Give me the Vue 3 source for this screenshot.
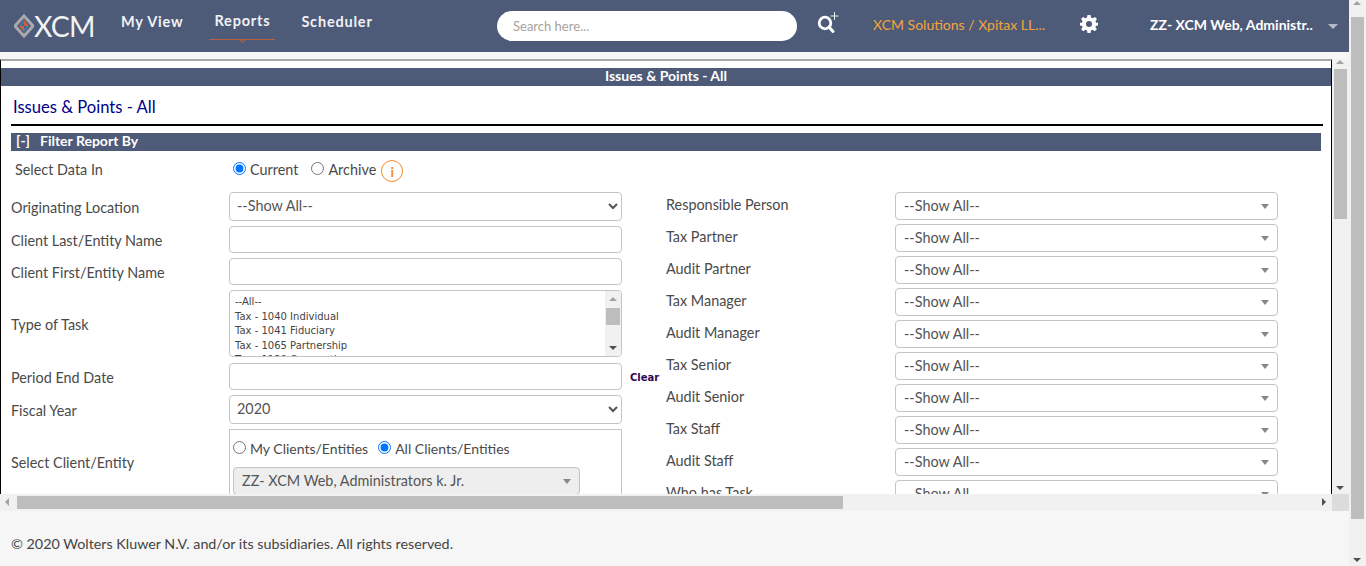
<template>
  <div class="page">
    <div class="main">
      <header class="topbar">
        <div class="logo">
          <svg class="logo-mark" width="20" height="26" viewBox="0 0 20 26">
            <path d="M10 3 L19 13 L10 23 L1 13 Z" fill="none" stroke="#a9a9ad" stroke-width="3" />
            <path d="M10 7 L15 13 L10 13 Z" fill="#d2603a" />
            <path d="M5 13 L10 13 L10 19 Z" fill="#d2603a" />
            <path d="M5 13 L10 7 L10 10 L7.5 13 Z" fill="#3f7fb5" />
            <path d="M15 13 L10 19 L10 16 L12.5 13 Z" fill="#3f7fb5" />
          </svg>
          <span class="logo-text">XCM</span>
        </div>
        <nav class="nav">
          <a class="nav-item">My View</a>
          <a class="nav-item active">Reports</a>
          <a class="nav-item">Scheduler</a>
        </nav>
        <div class="search">Search here...</div>
        <svg class="search-icon" width="24" height="24" viewBox="0 0 24 24">
          <circle cx="9" cy="12" r="5.8" fill="none" stroke="#fff" stroke-width="2.8" />
          <path d="M13 16 L17 20.5" stroke="#fff" stroke-width="3" stroke-linecap="round" />
          <path d="M18.5 1 V9 M14.5 5 H22.5" stroke="#fff" stroke-width="0.9" />
        </svg>
        <div class="org">XCM Solutions / Xpitax LL...</div>
        <svg class="gear" width="18" height="18" viewBox="0 0 24 24">
          <path fill="#fff" fill-rule="evenodd" d="M10 0 H14 L14.7 3.4 L17 4.4 L20 2.5 L22.6 5.3 L20.6 8.1 L21.5 10.3 L24 10.4 V13.9 L21.5 14.3 L20.6 16.2 L22.5 19 L19.6 21.7 L16.9 19.7 L14.7 20.6 L14 24 H10 L9.3 20.6 L7.1 19.7 L4.4 21.7 L1.5 19 L3.4 16.2 L2.5 14.3 L0 13.9 V10.4 L2.5 10.3 L3.4 8.1 L1.4 5.3 L4 2.5 L7 4.4 L9.3 3.4 Z M12 8 A4 4 0 1 0 12 16 A4 4 0 1 0 12 8 Z" />
        </svg>
        <div class="user">ZZ- XCM Web, Administr..</div>
        <span class="user-caret"></span>
      </header>

      <div class="frame-wrap">
        <div class="frame">
          <div class="frame-title">Issues &amp; Points - All</div>
          <h1 class="report-title">Issues &amp; Points - All</h1>
          <div class="filter-bar"><span class="toggle">[-]</span>Filter Report By</div>

          <div class="data-row">
            <span class="data-label">Select Data In</span>
            <label class="radio first"><input type="radio" name="data" checked />Current</label>
            <label class="radio"><input type="radio" name="data" />Archive</label>
            <span class="info">i</span>
          </div>

          <div class="columns">
            <div class="left">
              <div class="row r-location">
                <label>Originating Location</label>
                <select class="native"><option>--Show All--</option></select>
              </div>
              <div class="row r-input">
                <label>Client Last/Entity Name</label>
                <input class="text" type="text" />
              </div>
              <div class="row r-input">
                <label>Client First/Entity Name</label>
                <input class="text" type="text" />
              </div>
              <div class="row r-list">
                <label>Type of Task</label>
                <div class="listbox">
                  <div class="list-items">
                    <div v-for="t in tasks" :key="t">{{ t }}</div>
                  </div>
                  <div class="list-scroll">
                    <span class="arrow up small"></span>
                    <span class="list-thumb"></span>
                    <span class="arrow down small"></span>
                  </div>
                </div>
              </div>
              <div class="row r-period">
                <label>Period End Date</label>
                <input class="text" type="text" />
                <a class="clear">Clear</a>
              </div>
              <div class="row r-year">
                <label>Fiscal Year</label>
                <select class="native"><option>2020</option></select>
              </div>
              <div class="row r-client">
                <label>Select Client/Entity</label>
                <div class="client-box">
                  <div class="client-radios">
                    <label class="radio"><input type="radio" name="client" />My Clients/Entities</label>
                    <label class="radio"><input type="radio" name="client" checked />All Clients/Entities</label>
                  </div>
                  <div class="fake-select disabled">
                    <span>ZZ- XCM Web, Administrators k. Jr.</span>
                    <span class="caret"></span>
                  </div>
                </div>
              </div>
            </div>

            <div class="right">
              <div v-for="p in people" :key="p" class="person">
                <label>{{ p }}</label>
                <div class="fake-select">
                  <span>--Show All--</span>
                  <span class="caret"></span>
                </div>
              </div>
            </div>
          </div>
        </div>
        <div class="vbar inner">
          <span class="arrow up"></span>
          <span class="vthumb inner-thumb"></span>
          <span class="arrow down"></span>
        </div>
      </div>

      <div class="hbar">
        <span class="arrow left"></span>
        <div class="htrack"><span class="hthumb"></span></div>
        <span class="arrow right"></span>
        <span class="corner"></span>
      </div>

      <footer class="footer">© 2020 Wolters Kluwer N.V. and/or its subsidiaries. All rights reserved.</footer>
    </div>

    <div class="vbar outer">
      <span class="arrow up"></span>
      <span class="vthumb outer-thumb"></span>
      <span class="arrow down"></span>
    </div>
  </div>
</template>

<script setup>
const tasks = [
  '--All--',
  'Tax - 1040 Individual',
  'Tax - 1041 Fiduciary',
  'Tax - 1065 Partnership',
  'Tax - 1120 Corporation',
]

const people = [
  'Responsible Person',
  'Tax Partner',
  'Audit Partner',
  'Tax Manager',
  'Audit Manager',
  'Tax Senior',
  'Audit Senior',
  'Tax Staff',
  'Audit Staff',
  'Who has Task',
]
</script>

<style>
html,
body {
  margin: 0;
  overflow: hidden;
}
</style>

<style scoped>
.page {
  display: flex;
  width: 1366px;
  height: 566px;
  overflow: hidden;
  font-family: Lato, "Open Sans", sans-serif;
  font-size: 14.4px;
  color: #4a4a4a;
  background: #f6f6f6;
}

.main {
  display: flex;
  flex-direction: column;
  width: 1349px;
  flex: none;
}

/* top bar */
.topbar {
  display: flex;
  align-items: center;
  height: 52px;
  flex: none;
  background: #4d5a78;
  color: #fff;
}

.logo {
  display: flex;
  align-items: center;
  width: 121px;
  padding-left: 14px;
  padding-bottom: 1px;
  box-sizing: border-box;
  flex: none;
}

.logo-text {
  font-size: 28.5px;
  font-weight: 400;
  letter-spacing: -0.8px;
  line-height: 26px;
  color: #f2f2f2;
}

.nav {
  display: flex;
  width: 376px;
  flex: none;
  margin-top: -6px;
  font-size: 14.5px;
  font-weight: 700;
  letter-spacing: 0.8px;
  color: #f0f1f4;
}

.nav-item {
  position: relative;
  margin-right: 31px;
  padding-bottom: 3px;
}

.nav-item.active {
  margin: -1px 26px 1px -5px;
  padding: 0 5px;
}

.nav-item.active::after {
  content: "";
  position: absolute;
  left: 0;
  right: 0;
  top: 27px;
  height: 1px;
  background: #b8603f;
}

.nav-item.active::before {
  content: "";
  position: absolute;
  left: 50%;
  top: 25px;
  width: 4px;
  height: 4px;
  margin-left: -2px;
  border-right: 1px solid #b8603f;
  border-bottom: 1px solid #b8603f;
  transform: rotate(45deg);
}

.search {
  width: 300px;
  height: 30px;
  flex: none;
  margin-top: -1px;
  padding-left: 16px;
  box-sizing: border-box;
  border-radius: 15px;
  background: #fff;
  color: #a8a29c;
  font-size: 13px;
  line-height: 30px;
}

.search-icon {
  flex: none;
  margin: -7px 0 0 19px;
}

.org {
  width: 207px;
  flex: none;
  margin-left: 33px;
  margin-top: -4px;
  color: #f5a43c;
  font-size: 14px;
  white-space: nowrap;
}

.gear {
  flex: none;
  margin-top: -5px;
  margin-right: 52px;
}

.user {
  width: 178px;
  flex: none;
  margin-top: -4px;
  font-size: 14px;
  font-weight: 700;
  white-space: nowrap;
}

.user-caret {
  flex: none;
  margin-top: 1px;
  border-left: 5px solid transparent;
  border-right: 5px solid transparent;
  border-top: 5px solid #b4bac8;
}

/* report frame */
.frame-wrap {
  display: flex;
  height: 435px;
  flex: none;
  margin-top: 7px;
}

.frame {
  width: 1332px;
  flex: none;
  box-sizing: border-box;
  overflow: hidden;
  border-top: 2px solid #a9a9a9;
  border-left: 1px solid #000;
  border-right: 1px solid #000;
  background: #fff;
}

.frame-title {
  height: 18px;
  margin-top: 7px;
  background: #4d5a78;
  color: #fff;
  font-size: 14px;
  font-weight: 700;
  line-height: 16px;
  text-align: center;
}

.report-title {
  height: 38px;
  margin: 0 8px 0 10px;
  padding-left: 2px;
  border-bottom: 2px solid #000;
  color: #00008b;
  font-size: 16.6px;
  font-weight: 400;
  line-height: 42px;
}

.filter-bar {
  height: 18px;
  margin: 7px 10px 0;
  padding-left: 5px;
  background: #4d5a78;
  color: #fff;
  font-size: 14px;
  font-weight: 700;
  line-height: 16px;
}

.toggle {
  margin-right: 10px;
}

.data-row {
  display: flex;
  align-items: center;
  height: 24px;
  margin: 6px 0 11px 14px;
}

.data-label {
  width: 218px;
}

.radio {
  display: inline-flex;
  align-items: center;
  margin-right: 13px;
}

.radio input {
  width: 13px;
  height: 13px;
  margin: 0 4px 2px 0;
}

.info {
  display: flex;
  align-items: center;
  justify-content: center;
  width: 20px;
  height: 20px;
  margin-top: 4px;
  margin-left: -8px;
  border: 1px solid #f28c28;
  border-radius: 50%;
  color: #f28c28;
  font-size: 14px;
  font-weight: 700;
}

.columns {
  display: flex;
  padding-left: 10px;
}

.left {
  width: 655px;
  flex: none;
}

.row {
  display: flex;
  align-items: center;
}

.row > label {
  width: 218px;
  flex: none;
}

.native,
.text {
  width: 393px;
  box-sizing: border-box;
  border: 1px solid #c4c4c4;
  border-radius: 4px;
  background: #fff;
  color: #555;
  font-family: inherit;
  font-size: 14.4px;
}

.native {
  height: 29px;
  padding: 0 4px 2px 3px;
}

.text {
  height: 27px;
  padding: 0 8px;
}

.r-location {
  margin-bottom: 5px;
}

.r-location > label,
.r-year > label {
  padding-top: 1px;
}

.r-input {
  margin-bottom: 5px;
}

.r-input > label {
  padding-top: 2px;
}

.r-list {
  margin-bottom: 6px;
}

.r-list > label {
  padding-top: 2px;
}

.listbox {
  display: flex;
  width: 393px;
  height: 67px;
  box-sizing: border-box;
  overflow: hidden;
  border: 1px solid #c4c4c4;
  border-radius: 4px;
}

.list-items {
  flex: 1;
  padding: 4px 0 0 5px;
  color: #444;
  font-family: "DejaVu Sans", sans-serif;
  font-size: 10px;
  line-height: 14.5px;
}

.list-scroll {
  position: relative;
  width: 16px;
  flex: none;
  background: #f1f1f1;
}

.list-thumb {
  position: absolute;
  left: 1px;
  right: 1px;
  top: 17px;
  height: 17px;
  background: #bdbdbd;
}

.r-period {
  margin-bottom: 5px;
}

.r-period > label {
  padding-top: 2px;
}

.clear {
  margin: 2px 0 0 8px;
  color: #2e0854;
  font-family: "DejaVu Sans", sans-serif;
  font-size: 10px;
  font-weight: 700;
}

.r-year {
  margin-bottom: 5px;
}

.r-client {
  align-items: flex-start;
}

.r-client > label {
  padding-top: 25px;
}

.client-box {
  width: 393px;
  height: 90px;
  box-sizing: border-box;
  flex: none;
  padding: 10px 3px 0;
  border: 1px solid #c4c4c4;
}

.client-radios {
  height: 27px;
  font-size: 14px;
}

.client-radios .radio {
  margin-right: 10px;
}

.client-box .fake-select {
  width: 347px;
}

.right {
  width: 612px;
  flex: none;
  margin-left: 0;
}

.person {
  display: flex;
  height: 32px;
}

.person label {
  width: 229px;
  flex: none;
  padding-top: 4px;
}

.fake-select {
  position: relative;
  width: 383px;
  height: 28px;
  box-sizing: border-box;
  padding-left: 8px;
  border: 1px solid #c4c4c4;
  border-radius: 4px;
  background: #fff;
  color: #555;
  line-height: 26px;
}

.fake-select.disabled {
  background: #eee;
}

.caret {
  position: absolute;
  right: 8px;
  top: 11px;
  border-left: 4px solid transparent;
  border-right: 4px solid transparent;
  border-top: 5px solid #888;
}

/* scrollbars */
.vbar {
  position: relative;
  width: 17px;
  flex: none;
  background: #f1f1f1;
}

.vbar.outer {
  height: 566px;
}

.vthumb {
  position: absolute;
  left: 2px;
  right: 2px;
  background: #bdbdbd;
}

.inner-thumb {
  top: 10px;
  height: 150px;
}

.outer-thumb {
  top: 17px;
  height: 502px;
}

.arrow {
  position: absolute;
  width: 0;
  height: 0;
  border: 4px solid transparent;
}

.arrow.up {
  left: 4px;
  top: 1px;
  border-top: 0;
  border-bottom: 4px solid #a3a3a3;
}

.arrow.down {
  left: 4px;
  bottom: 4px;
  border-bottom: 0;
  border-top: 4px solid #505050;
}

.arrow.small {
  left: 4px;
}

.list-scroll .arrow.up {
  top: 6px;
}

.list-scroll .arrow.down {
  bottom: 6px;
}

.hbar {
  position: relative;
  display: flex;
  height: 17px;
  flex: none;
  background: #f1f1f1;
}

.htrack {
  position: relative;
  width: 1298px;
  margin-left: 17px;
}

.hthumb {
  position: absolute;
  left: 0;
  top: 2px;
  bottom: 2px;
  width: 826px;
  background: #bdbdbd;
}

.arrow.left {
  left: 5px;
  top: 4px;
  border-left: 0;
  border-right: 4px solid #a3a3a3;
}

.arrow.right {
  left: 1322px;
  top: 4px;
  border-right: 0;
  border-left: 4px solid #505050;
}

.corner {
  position: absolute;
  right: 0;
  top: 0;
  width: 17px;
  height: 17px;
  background: #dcdcdc;
}

.footer {
  flex: 1;
  padding: 24px 0 0 11px;
  background: #f6f6f6;
  color: #444;
  font-size: 14.3px;
}
</style>
